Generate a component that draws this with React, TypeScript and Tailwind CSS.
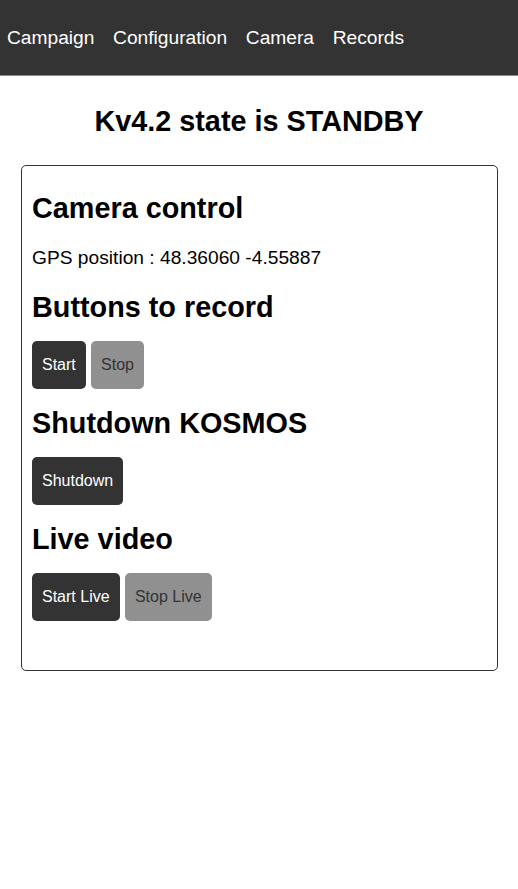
import React from "react";

const font = { fontFamily: '"Liberation Sans", Arial, sans-serif' };

function Btn({ children, active }: { children: React.ReactNode; active?: boolean }) {
  return (
    <button
      className={
        active
          ? "h-[48px] px-[10px] rounded-[5px] bg-[#333333] text-white text-[16px] leading-[18px]"
          : "h-[48px] px-[10px] rounded-[5px] bg-[#909090] text-[#333333] text-[16px] leading-[18px]"
      }
    >
      {children}
    </button>
  );
}

function H({ children, mt }: { children: React.ReactNode; mt: string }) {
  return <h2 className={`${mt} text-[28.8px] leading-[33px] font-bold text-black`}>{children}</h2>;
}

export default function App() {
  return (
    <div className="min-h-[889px] bg-white" style={font}>
      <nav className="h-[76px] bg-[#333333] border-b border-[#8a8a8a] flex items-center pl-[7px] gap-[18.6px] text-white text-[19.2px] leading-[22px]">
        <a>Campaign</a>
        <a>Configuration</a>
        <a>Camera</a>
        <a>Records</a>
      </nav>
      <h1 className="mt-[29px] text-center text-[28.8px] leading-[33px] font-bold text-black">
        Kv4.2 state is STANDBY
      </h1>
      <div className="mt-[27px] ml-[21px] mr-[20px] border border-[#333333] rounded-[5px] px-[10px] pb-[49px] flex flex-col items-start">
        <H mt="mt-[26px]">Camera control</H>
        <p className="mt-[22px] text-[19.2px] leading-[22px] text-black">GPS position : 48.36060 -4.55887</p>
        <H mt="mt-[22px]">Buttons to record</H>
        <div className="mt-[17px] flex gap-[5.3px]">
          <Btn active>Start</Btn>
          <Btn>Stop</Btn>
        </div>
        <H mt="mt-[18px]">Shutdown KOSMOS</H>
        <div className="mt-[17px] flex gap-[5.3px]">
          <Btn active>Shutdown</Btn>
        </div>
        <H mt="mt-[18px]">Live video</H>
        <div className="mt-[17px] flex gap-[5.3px]">
          <Btn active>Start Live</Btn>
          <Btn>Stop Live</Btn>
        </div>
      </div>
    </div>
  );
}
